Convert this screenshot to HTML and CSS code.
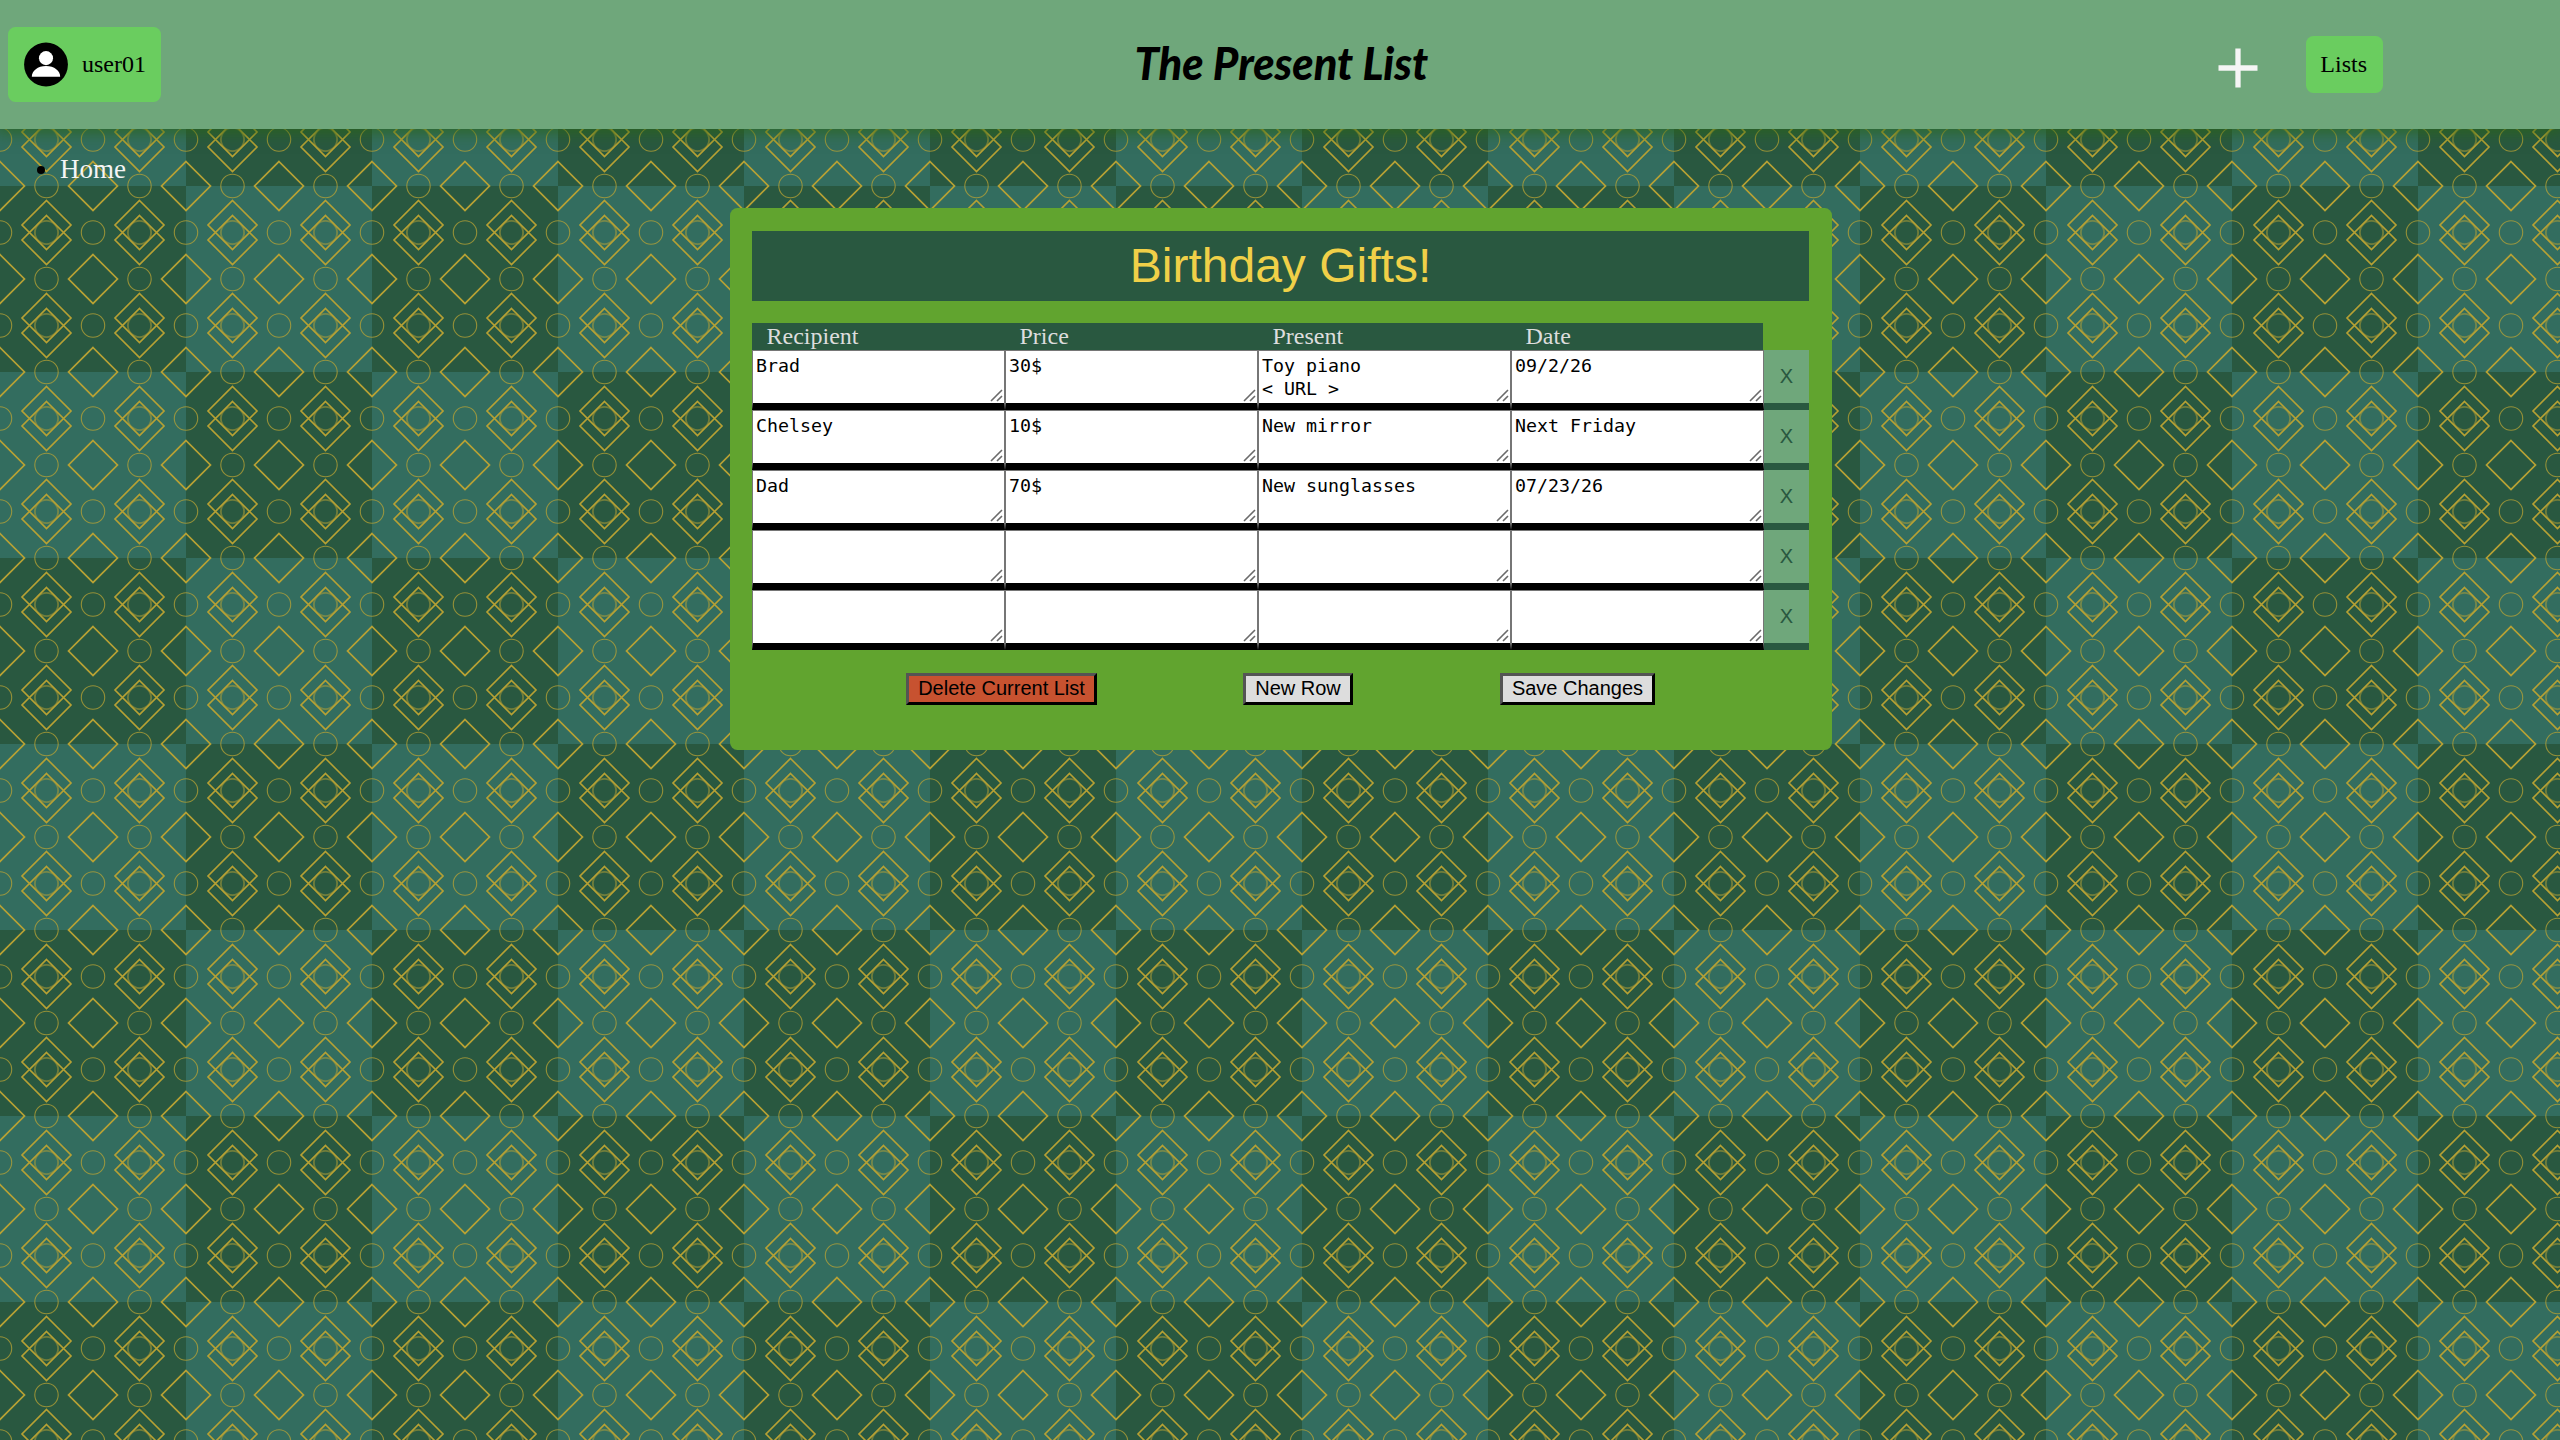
FILE: index.html
```html
<!DOCTYPE html>
<html lang="en">
<head>
<meta charset="utf-8">
<title>The Present List</title>
<link rel="stylesheet" href="styles.css">
</head>
<body>
<header class="topbar">
  <div class="topbar-left">
    <a class="pill user">
      <svg class="avatar" viewBox="0 0 46 46"><circle cx="23" cy="23" r="22.4"/><circle cx="23" cy="16.5" r="7.2" fill="#fff"/><path d="M8.5 35.5c0-6 6-11 14.500-11s14.500 5 14.500 11z" fill="#fff"/></svg>
      <span>user01</span>
    </a>
  </div>
  <h1 class="brand"><span class="brand-text">The Present List</span></h1>
  <div class="topbar-right">
    <svg class="plus" viewBox="0 0 40 40"><path d="M.5 20h39M20 .5v39" stroke="#f5f5f5" stroke-width="5.300"/></svg>
    <a class="pill lists">Lists</a>
  </div>
</header>
<ul class="crumbs"><li>Home</li></ul>
<main class="panel">
  <h2 class="list-title">Birthday Gifts!</h2>
  <div class="heads"><span>Recipient</span><span>Price</span><span>Present</span><span>Date</span></div>
  <div class="rows" id="rows"></div>
  <div class="actions">
    <button class="action delete">Delete Current List</button>
    <button class="action new">New Row</button>
    <button class="action save">Save Changes</button>
  </div>
</main>
<script src="script.js"></script>
</body>
</html>
```
FILE: script.js
```js
const gifts = [
  ["Brad", "30$", "Toy piano\n< URL >", "09/2/26"],
  ["Chelsey", "10$", "New mirror", "Next Friday"],
  ["Dad", "70$", "New sunglasses", "07/23/26"],
  ["", "", "", ""],
  ["", "", "", ""]
];
const grip = '<svg class="grip" viewBox="0 0 13 13"><path d="M1 12 12 1M7 12l5-5" fill="none" stroke="#6b6b6b" stroke-width="1.6"/></svg>';
const rows = document.getElementById("rows");
for (const gift of gifts) {
  const row = document.createElement("div");
  row.className = "row";
  for (const value of gift) {
    const cell = document.createElement("div");
    cell.className = "cell";
    cell.textContent = value;
    cell.insertAdjacentHTML("beforeend", grip);
    row.append(cell);
  }
  const remove = document.createElement("button");
  remove.className = "remove";
  remove.textContent = "X";
  row.append(remove);
  rows.append(row);
}
```
FILE: styles.css
```css
* { box-sizing: border-box; }

body {
  margin: 0;
  min-height: 1440px;
  font: 24px/27px "Liberation Serif", serif;
  color: #000;
  background-image:
    url("data:image/svg+xml,%3Csvg xmlns='http://www.w3.org/2000/svg' width='93' height='93'%3E%3Cg fill='none' stroke='%23b7a133' stroke-width='1.65'%3E%3Cpath d='M46.500 14.500 71 39 46.500 63.500 22 39zM46.500 29.500 71 54 46.500 78.500 22 54zM0-24.500 24.500 0 0 24.500-24.500 0zM93-24.500 117.500 0 93 24.500 68.500 0zM0 68.500 24.500 93 0 117.500-24.500 93zM93 68.500 117.500 93 93 117.500 68.500 93z'/%3E%3C/g%3E%3Cg fill='none' stroke='%23b7a133' stroke-opacity='.75' stroke-width='1.1'%3E%3Ccircle cx='46.500' cy='0' r='11.700'/%3E%3Ccircle cx='46.500' cy='93' r='11.700'/%3E%3Ccircle cx='0' cy='46.500' r='11.700'/%3E%3Ccircle cx='93' cy='46.500' r='11.700'/%3E%3Ccircle cx='46.500' cy='46.500' r='11.600' stroke-width='1.8' stroke-opacity='.5'/%3E%3C/g%3E%3C/svg%3E"),
    conic-gradient(#295840 25%, #336d5f 0 50%, #295840 0 75%, #336d5f 0);
  background-size: 93px 93px, 372px 372px;
}

.topbar {
  display: grid;
  grid-template-columns: 1fr auto 1fr;
  align-items: center;
  height: 129px;
  padding: 0 177px 0 8px;
  background: #6fa77b;
  box-shadow: 0 0 15px 3px rgba(44, 100, 20, .8);
}

.topbar-left { display: flex; }

.topbar-right {
  display: flex;
  align-items: center;
  justify-content: flex-end;
  gap: 48px;
}

.pill {
  display: flex;
  align-items: center;
  gap: 14px;
  padding: 15px;
  border-radius: 7.5px;
  background: #6acd5f;
}

.lists { padding: 15px 16px 15px 14px; }
.avatar { width: 46px; height: 45px; margin-right: -1px; }
.plus { width: 40px; height: 40px; margin-top: 7px; }

.brand {
  margin: 0 0 4px 172px;
  font: italic 900 46px/60px Lato, sans-serif;
  white-space: nowrap;
}

.brand-text { display: inline-block; transform: scaleX(.945); }

.crumbs {
  margin: 0;
  padding: 25px 0 0 60px;
  font-size: 27px;
  line-height: 31px;
  color: #f5f5f5;
}

.crumbs li::marker { color: #000; }

.panel {
  width: 1102px;
  height: 542px;
  margin: 23px 0 0 730px;
  padding: 23px 23px 0 22px;
  border-radius: 7.5px;
  background: #61a42f;
}

.list-title {
  margin: 0 0 22px;
  height: 70px;
  background: #295840;
  color: #f0d048;
  font: 48px/70px "Liberation Sans", sans-serif;
  text-align: center;
}

.heads {
  display: grid;
  grid-template-columns: repeat(4, 253px);
  width: 1011px;
  background: #295840;
  color: #ddd;
}

.heads span { padding-left: 14.5px; }

.row {
  display: grid;
  grid-template-columns: repeat(4, 253px) 45px;
  height: 60px;
}

.cell {
  position: relative;
  padding: 3px;
  border: 1px solid #767676;
  border-bottom: 7px solid #000;
  background: #fff;
  font: 18.270px/23px "DejaVu Sans Mono", monospace;
  white-space: pre-wrap;
}

.grip {
  position: absolute;
  right: 1px;
  bottom: 1px;
  width: 13px;
  height: 13px;
}

.remove {
  padding: 0 0 1px;
  border: 0;
  border-bottom: 7px solid #295840;
  background: #6fa77b;
  color: #295840;
  font: 20px "Liberation Sans", sans-serif;
}

.actions {
  display: flex;
  justify-content: space-between;
  padding: 23px 154px 0;
}

.action {
  height: 32px;
  padding: 0 0 2px;
  border: 3px outset #000;
  background: #ddd;
  color: #000;
  font: 20px/23px "Liberation Sans", sans-serif;
}

.delete { width: 191px; background: #c75230; }
.new { width: 110px; margin-left: -1px; }
.save { width: 155px; }
```
